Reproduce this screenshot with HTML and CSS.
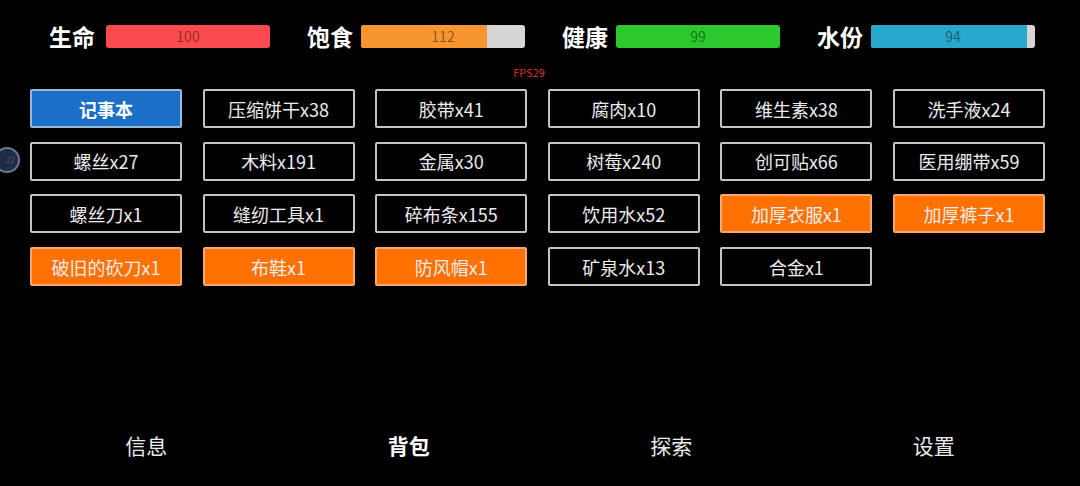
FILE: index.html
```html
<!DOCTYPE html>
<html lang="zh-CN">
<head>
  <meta charset="UTF-8" />
  <meta name="viewport" content="width=device-width, initial-scale=1.0"/>
  <title>背包</title>
  <link rel="stylesheet" href="styles.css">
</head>
<body>

  <header class="stats">
    <div class="stat">
      <span class="stat-label">生命</span>
      <div class="bar"><div class="fill hp" style="width:100%"></div><span>100</span></div>
    </div>
    <div class="stat">
      <span class="stat-label">饱食</span>
      <div class="bar"><div class="fill food" style="width:76.8%"></div><span>112</span></div>
    </div>
    <div class="stat">
      <span class="stat-label">健康</span>
      <div class="bar"><div class="fill health" style="width:100%"></div><span>99</span></div>
    </div>
    <div class="stat">
      <span class="stat-label">水份</span>
      <div class="bar"><div class="fill water" style="width:95%"></div><span>94</span></div>
    </div>
  </header>

  <div class="fps">FPS29</div>

  <div class="items">
    <button class="item note">记事本</button>
    <button class="item">压缩饼干x38</button>
    <button class="item">胶带x41</button>
    <button class="item">腐肉x10</button>
    <button class="item">维生素x38</button>
    <button class="item">洗手液x24</button>

    <button class="item">螺丝x27</button>
    <button class="item">木料x191</button>
    <button class="item">金属x30</button>
    <button class="item">树莓x240</button>
    <button class="item">创可贴x66</button>
    <button class="item">医用绷带x59</button>

    <button class="item">螺丝刀x1</button>
    <button class="item">缝纫工具x1</button>
    <button class="item">碎布条x155</button>
    <button class="item">饮用水x52</button>
    <button class="item gear">加厚衣服x1</button>
    <button class="item gear">加厚裤子x1</button>

    <button class="item gear">破旧的砍刀x1</button>
    <button class="item gear">布鞋x1</button>
    <button class="item gear">防风帽x1</button>
    <button class="item">矿泉水x13</button>
    <button class="item">合金x1</button>
  </div>

  <div class="float-ball">22</div>

  <nav class="tabs">
    <a href="#">信息</a>
    <a href="#" class="active">背包</a>
    <a href="#">探索</a>
    <a href="#">设置</a>
  </nav>

</body>
</html>
```

FILE: styles.css
```css
:root {
  --bg: #000;
  --text: #ececec;
  --border: #c4c4c4;
  --blue: #1b6fc6;
  --orange: #ff7100;
  --track: #d6d6d6;
}
* { box-sizing: border-box; }
html, body {
  height: 100%;
}
body {
  margin: 0;
  background: var(--bg);
  color: var(--text);
  font-family: "Noto Sans CJK SC", "Noto Sans", sans-serif;
  display: flex;
  flex-direction: column;
  overflow: hidden;
  position: relative;
}
.stats {
  display: flex;
  gap: 37px;
  padding: 21px 0 0 52px;
}
.stat {
  display: flex;
  align-items: center;
}
.stat-label {
  font-size: 23px;
  font-weight: bold;
  line-height: 31px;
  margin-right: 8px;
  color: #fff;
}
.stat:first-child .stat-label {
  margin-left: -3px;
  margin-right: 11px;
}
.bar {
  position: relative;
  width: 164px;
  height: 23px;
  background: var(--track);
  border-radius: 3px;
  overflow: hidden;
}
.fill {
  height: 100%;
}
.fill.hp { background: #fb4b4f; }
.fill.food { background: #f7952f; }
.fill.health { background: #2bc82e; }
.fill.water { background: #27a8cc; }
.bar span {
  position: absolute;
  top: 0; left: 0;
  width: 100%;
  line-height: 23px;
  text-align: center;
  font-size: 14px;
  color: rgba(0,0,0,0.45);
}
.fps {
  text-align: center;
  padding-right: 22px;
  margin-top: 13px;
  font-size: 11px;
  line-height: 14px;
  color: #d8313a;
}
.items {
  display: grid;
  grid-template-columns: repeat(6, 152px);
  grid-auto-rows: 39px;
  column-gap: 20.6px;
  row-gap: 13.7px;
  padding-left: 30px;
  margin-top: 10px;
}
.item {
  background: #000;
  border: 2px solid var(--border);
  border-radius: 2px;
  color: var(--text);
  font-family: inherit;
  font-size: 18px;
  padding: 0;
  cursor: pointer;
}
.item.note {
  background: var(--blue);
  border-color: #9bb8d8;
  font-weight: bold;
  color: #fff;
}
.item.gear {
  background: var(--orange);
  border-color: #f6a872;
}
.float-ball {
  position: absolute;
  left: -6px;
  top: 147px;
  width: 26px;
  height: 26px;
  border-radius: 50%;
  background: #1f2c44;
  border: 2px solid #6d7a8c;
  color: #4c5a70;
  font-size: 8px;
  line-height: 22px;
  text-align: right;
  padding-right: 3px;
}
.tabs {
  margin-top: auto;
  display: flex;
  padding: 0 15px 26px;
}
.tabs a {
  flex: 1;
  text-align: center;
  font-size: 21px;
  line-height: 30px;
  color: var(--text);
  text-decoration: none;
}
.tabs a.active {
  font-weight: bold;
  color: #fff;
}
```
